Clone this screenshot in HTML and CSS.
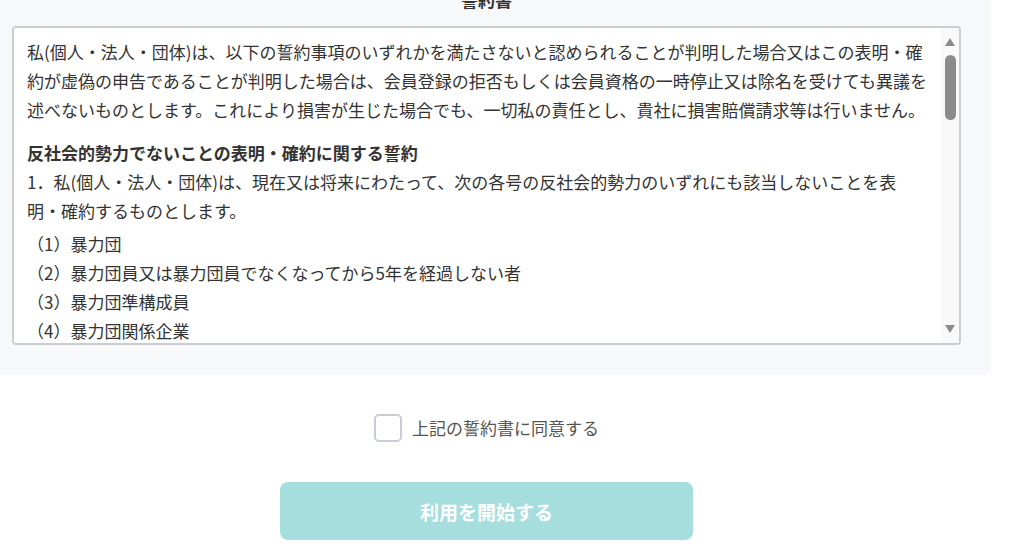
FILE: index.html
```html
<!DOCTYPE html>
<html lang="ja">

<head>
  <meta charset="utf-8">
  <title>誓約書</title>
  <link rel="stylesheet" href="styles.css">
</head>

<body>
  <div class="page">
    <div class="panel">
      <h2 class="title">誓約書</h2>
      <div class="terms">
        <div class="terms-body">
          <p class="lead">私(個人・法人・団体)は、以下の誓約事項のいずれかを満たさないと認められることが判明した場合又はこの表明・確約が虚偽の申告であることが判明した場合は、会員登録の拒否もしくは会員資格の一時停止又は除名を受けても異議を述べないものとします。これにより損害が生じた場合でも、一切私の責任とし、貴社に損害賠償請求等は行いません。</p>
          <h3>反社会的勢力でないことの表明・確約に関する誓約</h3>
          <p>1．私(個人・法人・団体)は、現在又は将来にわたって、次の各号の反社会的勢力のいずれにも該当しないことを表<br>明・確約するものとします。</p>
          <ul class="items">
            <li>（1）暴力団</li>
            <li>（2）暴力団員又は暴力団員でなくなってから5年を経過しない者</li>
            <li>（3）暴力団準構成員</li>
            <li>（4）暴力団関係企業</li>
            <li>（5）総会屋等、社会運動等標ぼうゴロ又は特殊知能暴力集団等</li>
            <li>（6）その他前各号に準ずる者</li>
          </ul>
          <p>2．私(個人・法人・団体)は、前項の各号のいずれかに該当する者(以下「反社会的勢力」という)との間で、次の各号のいずれにも該当しないことを表明・確約するものとします。</p>
          <ul class="items">
            <li>（1）反社会的勢力が経営を支配していると認められる関係を有すること</li>
            <li>（2）反社会的勢力が経営に実質的に関与していると認められる関係を有すること</li>
            <li>（3）不当に反社会的勢力を利用していると認められる関係を有すること</li>
            <li>（4）反社会的勢力に対して資金等を提供し、又は便宜を供与するなどの関与をしていると認められる関係を有すること</li>
            <li>（5）役員又は経営に実質的に関与している者が反社会的勢力と社会的に非難されるべき関係を有すること</li>
          </ul>
          <p>3．私(個人・法人・団体)は、自ら又は第三者を利用して次の各号の一にでも該当する行為を行わないことを確約するものとします。</p>
          <ul class="items">
            <li>（1）暴力的な要求行為</li>
            <li>（2）法的な責任を超えた不当な要求行為</li>
            <li>（3）取引に関して、脅迫的な言動をし、又は暴力を用いる行為</li>
            <li>（4）風説を流布し、偽計を用い又は威力を用いて貴社の信用を毀損し、又は貴社の業務を妨害する行為</li>
            <li>（5）その他前各号に準ずる行為</li>
          </ul>
        </div>
        <div class="scrollbar">
          <span class="arrow up"></span>
          <span class="thumb"></span>
          <span class="arrow down"></span>
        </div>
      </div>
    </div>

    <div class="actions">
      <label class="agree">
        <input type="checkbox" class="check">
        <span>上記の誓約書に同意する</span>
      </label>
      <button type="button" class="start" disabled>利用を開始する</button>
    </div>
  </div>
</body>

</html>
```

FILE: styles.css
```css
body {
  font-family: "Noto Sans CJK JP", "Noto Sans", sans-serif;
  background-color: #fff;
  color: #333;
  margin: 0;
  padding: 0;
  overflow: hidden;
  text-spacing-trim: space-all;
}

.page {
  width: 973px;
}

.panel {
  width: 949px;
  background-color: #f7f8fa;
  padding: 0 30px 30px 12px;
  border-bottom-right-radius: 8px;
}

.title {
  margin: -12px 0 14px;
  font-size: 17px;
  line-height: 24px;
  font-weight: bold;
  text-align: center;
  color: #333;
}

/* terms box */
.terms {
  display: flex;
  height: 319px;
  box-sizing: border-box;
  background-color: #fff;
  border: 2px solid #c9ced6;
  border-radius: 4px;
}

.terms-body {
  flex: 1;
  overflow-y: auto;
  scrollbar-width: none;
  padding: 9px 8px 0 13px;
  font-size: 17px;
  line-height: 29px;
}

.terms p,
.terms h3 {
  margin: 0;
  font-size: 17px;
}

.terms .lead {
  margin-bottom: 14px;
}

.terms h3 {
  font-weight: bold;
}

.items {
  list-style: none;
  margin: 4px 0 0;
  padding: 0;
}

.scrollbar {
  width: 18px;
  box-sizing: border-box;
  display: flex;
  flex-direction: column;
  padding: 10px 3px 10px 4px;
  background-color: #f9f9fa;
}

.arrow {
  width: 0;
  height: 0;
  border-left: 5.5px solid transparent;
  border-right: 5.5px solid transparent;
}

.arrow.up {
  border-bottom: 8px solid #8b8b8b;
}

.arrow.down {
  margin-top: auto;
  border-top: 8px solid #8b8b8b;
}

.thumb {
  width: 11px;
  height: 65px;
  margin-top: 9px;
  background-color: #8b8b8b;
  border-radius: 6px;
}

/* agree + button */
.actions {
  display: flex;
  flex-direction: column;
  align-items: center;
  padding-top: 39px;
}

.agree {
  display: flex;
  align-items: center;
  gap: 10px;
  height: 28px;
  font-size: 17px;
  line-height: 28px;
  color: #555;
  cursor: pointer;
}

.check {
  appearance: none;
  width: 28px;
  height: 28px;
  margin: 0;
  border: 2px solid #c9ced6;
  border-radius: 5px;
  background-color: #fff;
  box-sizing: border-box;
}

.start {
  margin-top: 40px;
  width: 413px;
  height: 58px;
  background-color: #a6dedd;
  color: #fff;
  font-family: "Noto Sans CJK JP", "Noto Sans", sans-serif;
  font-size: 19px;
  font-weight: bold;
  border: none;
  border-radius: 8px;
  cursor: pointer;
}
```
